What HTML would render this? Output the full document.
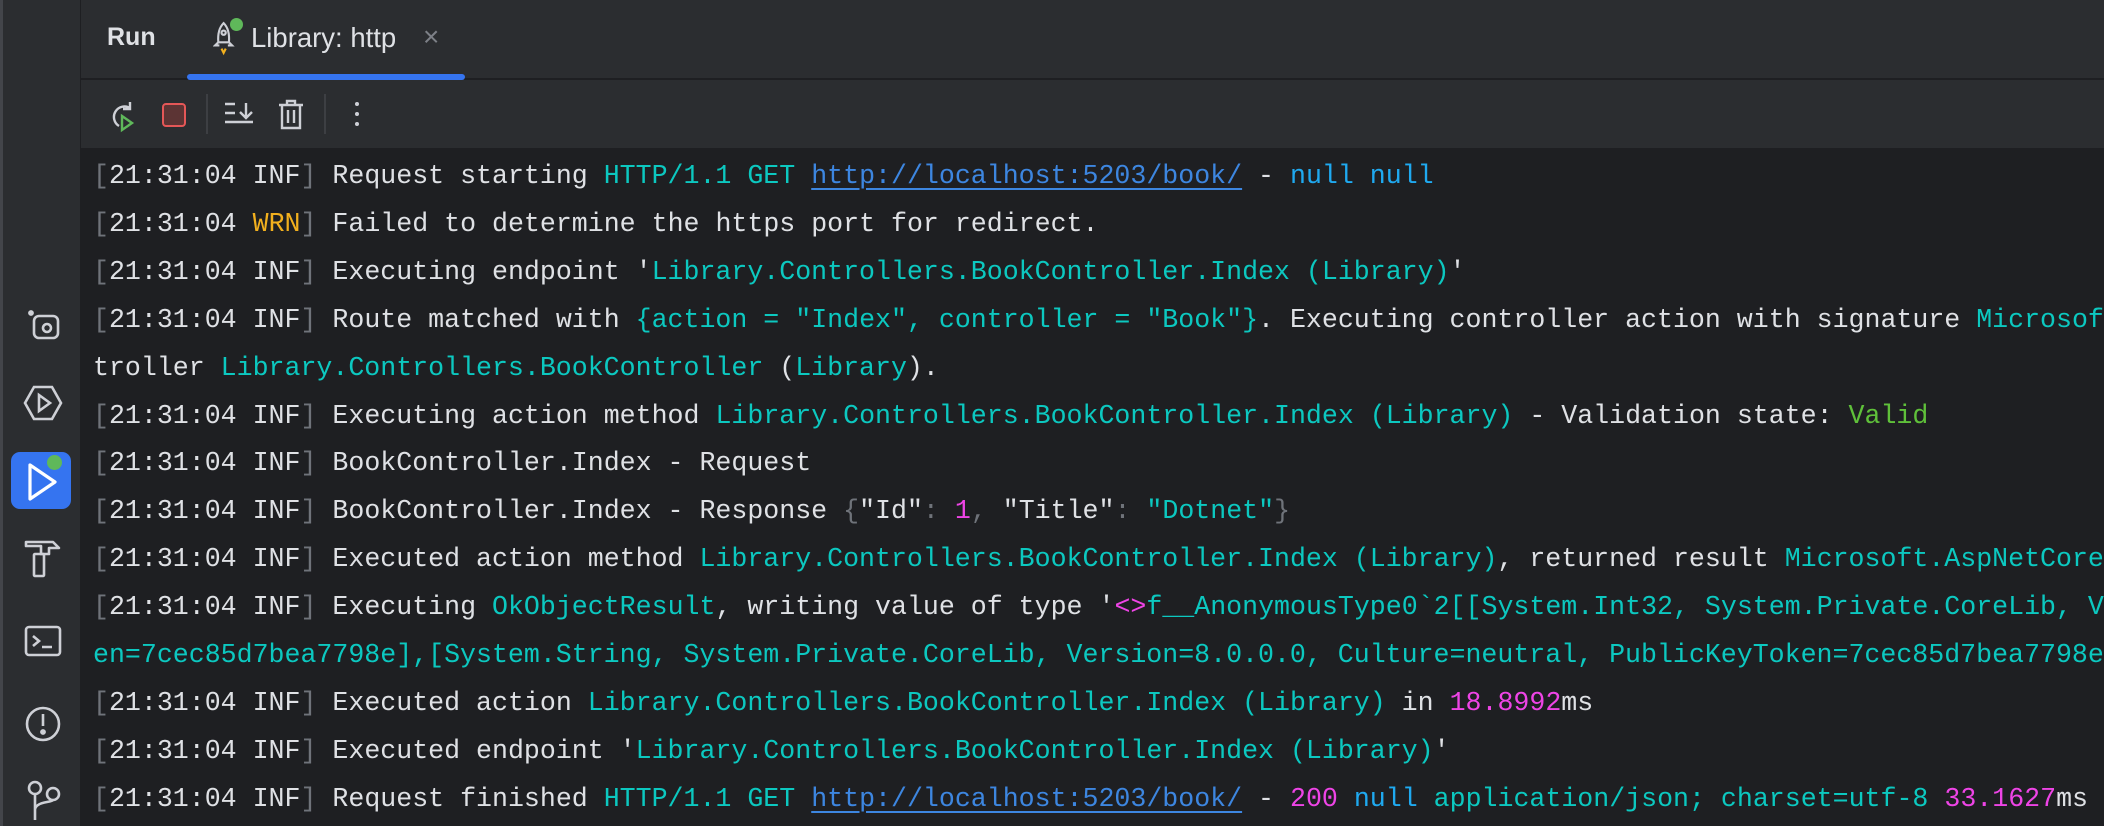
<!DOCTYPE html>
<html><head><meta charset="utf-8"><style>
*{margin:0;padding:0;box-sizing:border-box}
body{width:2104px;height:826px;overflow:hidden;background:#1e1f22;font-family:"Liberation Sans",sans-serif;position:relative}
#side{position:absolute;left:0;top:0;width:81px;height:826px;background:#2b2d30;border-left:3px solid #43454a;border-right:1px solid #1e1f22}
#head{position:absolute;left:81px;top:0;right:0;height:80px;background:#2b2d30;border-bottom:2px solid #1e1f22}
#tool{position:absolute;left:81px;top:80px;right:0;height:68px;background:#2b2d30}
#con{position:absolute;left:81px;top:153px;right:0;bottom:0;background:#1e1f22;font-family:"Liberation Mono",monospace;font-size:26.6px;line-height:47.9px;color:#dfe1e5;white-space:pre;overflow:hidden;padding-left:12px}
#bg2{position:absolute;left:81px;top:148px;right:0;height:6px;background:#1e1f22}
.g{color:#6f737a}.c{color:#0cc8c0}.b{color:#1fa9f0}.m{color:#ee44e6}.y{color:#f2b01e}.v{color:#5fc03a}
.u{color:#3d86e0;text-decoration:underline;text-decoration-thickness:2px;text-underline-offset:5px}
.ic{position:absolute}
</style></head><body>
<div id="side">
<svg class="ic" style="left:22px;top:306px" width="40" height="40" viewBox="0 0 40 40" fill="none" stroke="#ced0d6" stroke-width="2.6"><circle cx="6" cy="7" r="1.6" fill="#ced0d6"/><rect x="9" y="10" width="24" height="22" rx="5"/><circle cx="22" cy="22" r="4"/></svg>
<svg class="ic" style="left:19px;top:383px" width="42" height="40" viewBox="0 0 42 40" fill="none" stroke="#ced0d6" stroke-width="2.6"><path d="M12 4H30L39 20L30 36H12L3 20Z"/><path d="M17 12L28 20L17 28Z"/></svg>
<div class="ic" style="left:8px;top:452px;width:60px;height:57px;background:#3574f0;border-radius:9px"></div>
<svg class="ic" style="left:20px;top:460px" width="40" height="44" viewBox="0 0 40 44" fill="none" stroke="#fff" stroke-width="3.2" stroke-linejoin="round"><path d="M7 5L32 22L7 39Z"/></svg>
<div class="ic" style="left:44px;top:455px;width:15px;height:15px;background:#5fb85a;border-radius:50%"></div>
<svg class="ic" style="left:20px;top:534px" width="40" height="46" viewBox="0 0 40 46" fill="none" stroke="#ced0d6" stroke-width="2.6" stroke-linejoin="round"><path d="M3 8H30L36 14H26V20H18V12H3Z"/><rect x="11" y="20" width="10" height="22" rx="1"/></svg>
<svg class="ic" style="left:20px;top:622px" width="40" height="40" viewBox="0 0 40 40" fill="none" stroke="#ced0d6" stroke-width="2.6"><rect x="3" y="5" width="34" height="28" rx="3"/><path d="M10 14L16 19L10 24M19 25H29"/></svg>
<svg class="ic" style="left:20px;top:704px" width="40" height="40" viewBox="0 0 40 40" fill="none" stroke="#ced0d6" stroke-width="2.6"><circle cx="20" cy="20" r="16"/><path d="M20 10V22"/><circle cx="20" cy="28" r="1.6" fill="#ced0d6"/></svg>
<svg class="ic" style="left:20px;top:780px" width="40" height="46" viewBox="0 0 40 46" fill="none" stroke="#ced0d6" stroke-width="2.6"><circle cx="12" cy="8" r="6"/><circle cx="30" cy="14" r="6"/><path d="M12 14V40M12 30Q12 24 24 22Q30 21 30 20"/></svg>
</div>
<div id="head">
<div style="position:absolute;left:26px;top:23px;font-size:25px;font-weight:bold;color:#dfe1e5">Run</div>
<svg class="ic" style="left:132px;top:18px" width="34" height="40" viewBox="0 0 32 36" fill="none" stroke="#ced0d6" stroke-width="2"><path d="M10 4Q16 10 15 22H5Q4 10 10 4Z"/><path d="M5 22L2 25L6 25M15 22L18 25L14 25"/><circle cx="10" cy="13" r="2"/><path d="M8 28L10 32L12 28" stroke="#f2b01e"/></svg>
<div class="ic" style="left:149px;top:18px;width:13px;height:13px;background:#5fb85a;border-radius:50%"></div>
<div style="position:absolute;left:170px;top:22px;font-size:27.5px;color:#dfe1e5">Library: http</div>
<div style="position:absolute;left:342px;top:21px;font-size:28px;color:#7d8087">×</div>
<div style="position:absolute;left:106px;top:74px;width:278px;height:6px;background:#3574f0;border-radius:3px"></div>
</div>
<div id="tool">
<svg class="ic" style="left:25px;top:20px" width="34" height="34" viewBox="0 0 34 34" fill="none" stroke-width="2.4"><path d="M13 26A10 10 0 1 1 24 8M24 2V9H17" stroke="#ced0d6"/><path d="M16 16L26 23L16 30Z" stroke="#5fb85a"/></svg>
<div class="ic" style="left:81px;top:23px;width:24px;height:24px;background:#5c3434;border:2px solid #e55757;border-radius:4px"></div>
<div class="ic" style="left:125px;top:14px;width:2px;height:40px;background:#3d3f43"></div>
<svg class="ic" style="left:142px;top:20px" width="34" height="30" viewBox="0 0 34 30" fill="none" stroke="#ced0d6" stroke-width="2.4"><path d="M2 4H12M2 13H12M2 22H30M23 3V18M17 12L23 18L29 12"/></svg>
<svg class="ic" style="left:196px;top:18px" width="28" height="34" viewBox="0 0 28 34" fill="none" stroke="#ced0d6" stroke-width="2.4"><path d="M2 7H26M10 7V3H18V7M5 7V30H23V7M11 12V25M17 12V25"/></svg>
<div class="ic" style="left:243px;top:14px;width:2px;height:40px;background:#3d3f43"></div>
<div class="ic" style="left:274px;top:22px;width:4px;height:4px;background:#ced0d6;border-radius:50%;box-shadow:0 10px 0 #ced0d6,0 20px 0 #ced0d6"></div>
</div>
<div id="bg2"></div>
<div id="con"><span class="g">[</span>21:31:04 INF<span class="g">]</span> Request starting <span class="c">HTTP/1.1 GET</span> <span class="u">http://localhost:5203/book/</span> - <span class="b">null null</span>
<span class="g">[</span>21:31:04 <span class="y">WRN</span><span class="g">]</span> Failed to determine the https port for redirect.
<span class="g">[</span>21:31:04 INF<span class="g">]</span> Executing endpoint '<span class="c">Library.Controllers.BookController.Index (Library)</span>'
<span class="g">[</span>21:31:04 INF<span class="g">]</span> Route matched with <span class="c">{action = "Index", controller = "Book"}</span>. Executing controller action with signature <span class="c">Microsoft.AspNetCore.Mvc.IActionResult Index()</span>
troller <span class="c">Library.Controllers.BookController</span> (<span class="c">Library</span>).
<span class="g">[</span>21:31:04 INF<span class="g">]</span> Executing action method <span class="c">Library.Controllers.BookController.Index (Library)</span> - Validation state: <span class="v">Valid</span>
<span class="g">[</span>21:31:04 INF<span class="g">]</span> BookController.Index - Request
<span class="g">[</span>21:31:04 INF<span class="g">]</span> BookController.Index - Response <span class="g">{</span>"Id"<span class="g">:</span> <span class="m">1</span><span class="g">,</span> "Title"<span class="g">:</span> <span class="c">"Dotnet"</span><span class="g">}</span>
<span class="g">[</span>21:31:04 INF<span class="g">]</span> Executed action method <span class="c">Library.Controllers.BookController.Index (Library)</span>, returned result <span class="c">Microsoft.AspNetCore.Mvc.OkObjectResult</span>
<span class="g">[</span>21:31:04 INF<span class="g">]</span> Executing <span class="c">OkObjectResult</span>, writing value of type '<span class="m">&lt;&gt;</span><span class="c">f__AnonymousType0`2[[System.Int32, System.Private.CoreLib, Version=8.0.0.0</span>
<span class="c">en=7cec85d7bea7798e],[System.String, System.Private.CoreLib, Version=8.0.0.0, Culture=neutral, PublicKeyToken=7cec85d7bea7798e]]</span>
<span class="g">[</span>21:31:04 INF<span class="g">]</span> Executed action <span class="c">Library.Controllers.BookController.Index (Library)</span> in <span class="m">18.8992</span>ms
<span class="g">[</span>21:31:04 INF<span class="g">]</span> Executed endpoint '<span class="c">Library.Controllers.BookController.Index (Library)</span>'
<span class="g">[</span>21:31:04 INF<span class="g">]</span> Request finished <span class="c">HTTP/1.1 GET</span> <span class="u">http://localhost:5203/book/</span> - <span class="m">200</span> <span class="b">null</span> <span class="c">application/json; charset=utf-8</span> <span class="m">33.1627</span>ms</div>
</body></html>
